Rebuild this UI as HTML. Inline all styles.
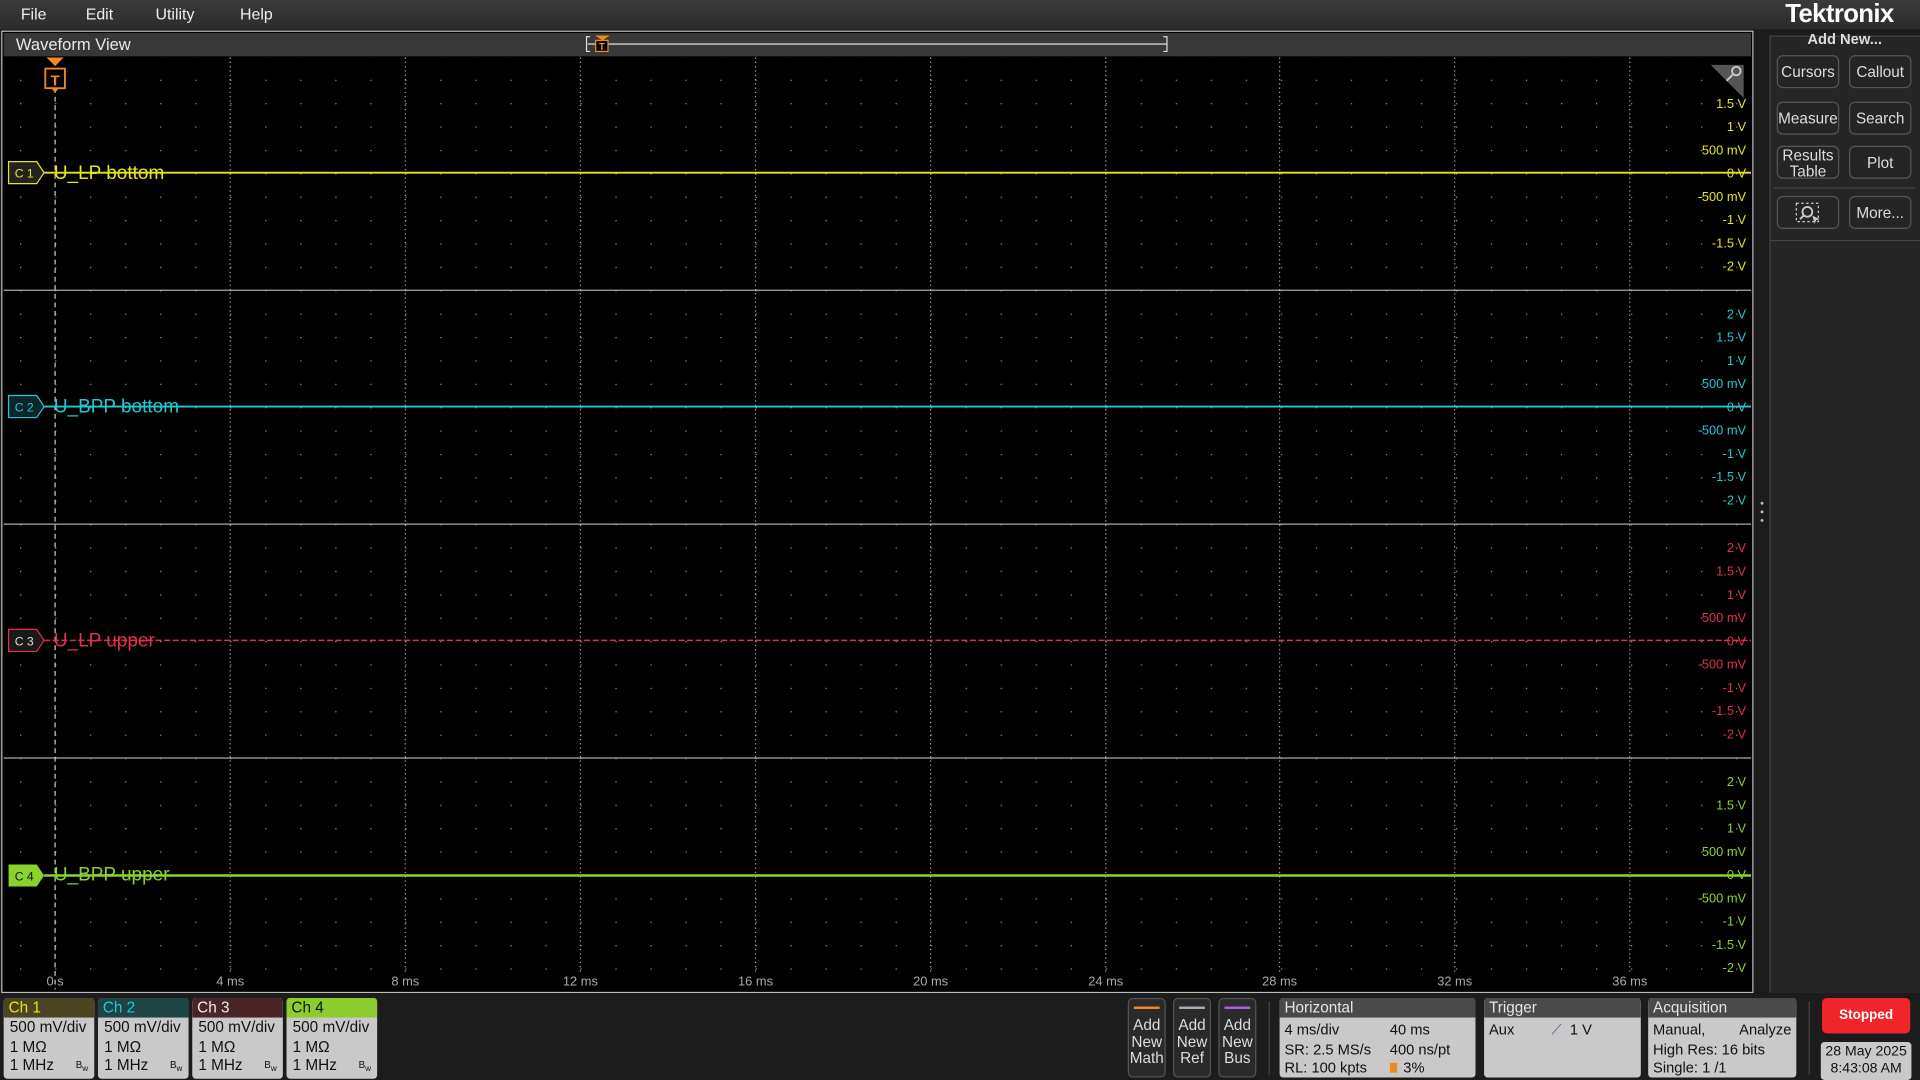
<!DOCTYPE html>
<html><head><meta charset="utf-8"><style>
html,body{margin:0;padding:0;background:#000;overflow:hidden;width:1920px;height:1080px}
#w{position:absolute;left:0;top:0;width:1568px;height:882px;transform:scale(1.22449);transform-origin:0 0;font-family:"Liberation Sans","DejaVu Sans",sans-serif;background:#1c1c1c}
.a{position:absolute}
.menu{left:0;top:0;width:1568px;height:24px;background:linear-gradient(#3a3a3a,#2c2c2c);color:#eee;font-size:13px}
.menu span{position:absolute;top:4px}
.btn{position:absolute;width:51px;height:27px;background:#252525;border:1px solid #5a5550;border-radius:5px;color:#ddd;font-size:12.5px;text-align:center;line-height:27px;box-sizing:border-box}
.ch{position:absolute;top:815px;width:74px;height:66px;background:#c9c9c9;border-radius:3px;overflow:hidden;font-size:12px;color:#111}
.ch .h{height:16px;line-height:16px;padding-left:4px;font-size:12.5px}
.ch .l{padding-left:5px;padding-top:1px;line-height:15.5px;font-size:12.5px}
.bw{position:absolute;right:5px;bottom:4px;font-size:8px}
.an{position:absolute;top:815px;width:31px;height:65px;background:#2a2a2a;border:1px solid #555;border-radius:4px;box-sizing:border-box;color:#ddd;font-size:12.5px;text-align:center;line-height:13.5px;padding-top:15px}
.an i{position:absolute;left:4px;right:4px;top:6px;height:2px}
.pn{position:absolute;top:815px;height:65px;background:#c9c9c9;border-radius:3px;overflow:hidden;color:#111;font-size:12px}
.pn .h{height:16px;background:#4a4a4a;color:#e6e6e6;padding-left:4px;line-height:16px;font-size:12.5px}
</style></head><body><div id="w">
<div class="a menu"><span style="left:17px">File</span><span style="left:70px">Edit</span><span style="left:127px">Utility</span><span style="left:196px">Help</span></div>
<div class="a" style="left:1458px;top:0px;color:#fff;font-weight:bold;font-size:21px;letter-spacing:-0.5px">Tektronix</div>
<div class="a" style="left:1px;top:25px;width:1431px;height:786px;border:1px solid #bbb;box-sizing:border-box;background:#000"></div>
<div class="a" style="left:3px;top:27px;width:1427px;height:19px;background:#383838;color:#e8e8e8;font-size:13.5px;line-height:19px;padding-left:10px;box-sizing:border-box">Waveform View</div>
<svg class="a" style="left:0;top:0" width="1568" height="882" viewBox="0 0 1568 882">
<defs>
<pattern id="d" x="45" y="46" width="28.6" height="19.1" patternUnits="userSpaceOnUse"><rect x="0" y="0" width="1" height="1" fill="#999"/></pattern>
</defs>
<line x1="480" y1="36" x2="953" y2="36" stroke="#aaa" stroke-width="1.5"/>
<path d="M482,30h-3v12h3M950,30h3v12h-3" stroke="#ddd" fill="none"/>
<path d="M486,29h12l-6,4z" fill="#f08a1e"/>
<rect x="486.5" y="33" width="10" height="9" fill="#000" stroke="#f08a1e"/>
<text x="491.5" y="41" font-size="8" fill="#f08a1e" text-anchor="middle" font-weight="bold">T</text>
<rect x="3" y="47" width="1427" height="762" fill="url(#d)"/>
<g stroke="#aaa" stroke-dasharray="1 2.5">
<line x1="188" y1="47" x2="188" y2="795"/><line x1="331" y1="47" x2="331" y2="795"/><line x1="474" y1="47" x2="474" y2="795"/><line x1="617" y1="47" x2="617" y2="795"/><line x1="760" y1="47" x2="760" y2="795"/><line x1="903" y1="47" x2="903" y2="795"/><line x1="1045" y1="47" x2="1045" y2="795"/><line x1="1188" y1="47" x2="1188" y2="795"/><line x1="1331" y1="47" x2="1331" y2="795"/>
</g>
<g stroke="#aaa"><line x1="3" y1="237" x2="1430" y2="237"/><line x1="3" y1="428" x2="1430" y2="428"/><line x1="3" y1="619" x2="1430" y2="619"/></g>
<line x1="45" y1="72" x2="45" y2="808" stroke="#ccc" stroke-dasharray="4 3"/>
<path d="M38,47h14l-7,7z" fill="#f08a1e"/>
<rect x="37" y="56" width="16" height="16" fill="#000" stroke="#f08a1e" stroke-width="1.5"/>
<text x="45" y="70" font-size="12" fill="#f08a1e" text-anchor="middle" font-weight="bold">T</text>
<path d="M42,72l3,4l3,-4z" fill="#f08a1e"/>
<path d="M1397,53h27v27z" fill="#555"/><circle cx="1418" cy="58" r="3.5" stroke="#ccc" fill="none" stroke-width="1.5"/><line x1="1415" y1="61" x2="1410" y2="66" stroke="#ccc" stroke-width="1.5"/>
<line x1="36" y1="141" x2="1430" y2="141" stroke="#e6e61e" stroke-width="1.5"/>
<line x1="36" y1="332" x2="1430" y2="332" stroke="#22c8d0" stroke-width="1.5"/>
<line x1="36" y1="523" x2="1430" y2="523" stroke="#e0304a" stroke-width="1.2" stroke-dasharray="5 2"/>
<line x1="36" y1="715" x2="1430" y2="715" stroke="#8cd22c" stroke-width="2"/>
<path d="M7,132h23l6,9l-6,9h-23z" fill="#222" stroke="#e6e61e"/><text x="12" y="145" font-size="10" fill="#e6e61e">C 1</text>
<path d="M7,323h23l6,9l-6,9h-23z" fill="#0c2628" stroke="#22c8d0"/><text x="12" y="336" font-size="10" fill="#22c8d0">C 2</text>
<path d="M7,514h23l6,9l-6,9h-23z" fill="#1a1a1a" stroke="#e0304a"/><text x="12" y="527" font-size="10" fill="#ddd">C 3</text>
<path d="M7,706h23l6,9l-6,9h-23z" fill="#8cd22c"/><text x="12" y="719" font-size="10" fill="#111">C 4</text>
<g font-size="15.5"><text x="44" y="146" fill="#e6e61e">U_LP bottom</text><text x="44" y="337" fill="#22c8d0">U_BPP bottom</text><text x="44" y="528" fill="#e0304a">U_LP upper</text><text x="44" y="719" fill="#8cd22c">U_BPP upper</text></g>
<g font-size="10.5" text-anchor="end">
<g fill="#e6e61e"><text x="1426" y="88">1.5 V</text><text x="1426" y="107">1 V</text><text x="1426" y="126">500 mV</text><text x="1426" y="145">0 V</text><text x="1426" y="164">-500 mV</text><text x="1426" y="183">-1 V</text><text x="1426" y="202">-1.5 V</text><text x="1426" y="221">-2 V</text></g>
<g fill="#22c8d0"><text x="1426" y="260">2 V</text><text x="1426" y="279">1.5 V</text><text x="1426" y="298">1 V</text><text x="1426" y="317">500 mV</text><text x="1426" y="336">0 V</text><text x="1426" y="355">-500 mV</text><text x="1426" y="374">-1 V</text><text x="1426" y="393">-1.5 V</text><text x="1426" y="412">-2 V</text></g>
<g fill="#e0304a"><text x="1426" y="451">2 V</text><text x="1426" y="470">1.5 V</text><text x="1426" y="489">1 V</text><text x="1426" y="508">500 mV</text><text x="1426" y="527">0 V</text><text x="1426" y="546">-500 mV</text><text x="1426" y="565">-1 V</text><text x="1426" y="584">-1.5 V</text><text x="1426" y="603">-2 V</text></g>
<g fill="#8cd22c"><text x="1426" y="642">2 V</text><text x="1426" y="661">1.5 V</text><text x="1426" y="680">1 V</text><text x="1426" y="699">500 mV</text><text x="1426" y="718">0 V</text><text x="1426" y="737">-500 mV</text><text x="1426" y="756">-1 V</text><text x="1426" y="775">-1.5 V</text><text x="1426" y="794">-2 V</text></g>
</g>
<g font-size="10.5" fill="#aaa" text-anchor="middle"><text x="45" y="805">0 s</text><text x="188" y="805">4 ms</text><text x="331" y="805">8 ms</text><text x="474" y="805">12 ms</text><text x="617" y="805">16 ms</text><text x="760" y="805">20 ms</text><text x="903" y="805">24 ms</text><text x="1045" y="805">28 ms</text><text x="1188" y="805">32 ms</text><text x="1331" y="805">36 ms</text></g>
<g fill="#bbb"><circle cx="1439" cy="411" r="1.2"/><circle cx="1439" cy="418" r="1.2"/><circle cx="1439" cy="425" r="1.2"/></g>
</svg>
<div class="a" style="left:1445px;top:29px;width:123px;height:781px;border-left:1px solid #444;border-top:1px solid #444;background:#262626"></div>
<div class="a" style="left:1445px;top:25px;width:123px;text-align:center;color:#ddd;font-weight:bold;font-size:12px">Add New...</div>
<div class="btn" style="left:1451px;top:45px">Cursors</div><div class="btn" style="left:1510px;top:45px">Callout</div>
<div class="btn" style="left:1451px;top:83px">Measure</div><div class="btn" style="left:1510px;top:83px">Search</div>
<div class="btn" style="left:1451px;top:119px;line-height:13px;padding-top:1px">Results<br>Table</div><div class="btn" style="left:1510px;top:119px">Plot</div>
<div class="a" style="left:1448px;top:153px;width:116px;height:1px;background:#444"></div>
<div class="btn" style="left:1451px;top:160px"><svg width="24" height="20" viewBox="0 0 24 20" style="margin-top:3px"><rect x="2" y="2" width="18" height="15" fill="none" stroke="#ccc" stroke-dasharray="2 2"/><circle cx="11" cy="9" r="4" fill="none" stroke="#ccc" stroke-width="1.5"/><line x1="8" y1="12" x2="5" y2="15" stroke="#ccc" stroke-width="1.5"/><path d="M15,12l6,3l-3,1l-1,3z" fill="#ccc"/></svg></div>
<div class="btn" style="left:1510px;top:160px">More...</div>
<div class="a" style="left:1445px;top:196px;width:123px;height:1px;background:#444"></div>
<div class="a" style="left:0;top:811px;width:1568px;height:71px;background:#1c1c1c"></div>
<div class="ch" style="left:3px"><div class="h" style="background:#4a4520;color:#e6e61e">Ch 1</div><div class="l">500 mV/div<br>1 MΩ<br>1 MHz</div><span class="bw">B<sub>w</sub></span></div>
<div class="ch" style="left:80px"><div class="h" style="background:#1e4545;color:#22c8d0">Ch 2</div><div class="l">500 mV/div<br>1 MΩ<br>1 MHz</div><span class="bw">B<sub>w</sub></span></div>
<div class="ch" style="left:157px"><div class="h" style="background:#4a2528;color:#eee">Ch 3</div><div class="l">500 mV/div<br>1 MΩ<br>1 MHz</div><span class="bw">B<sub>w</sub></span></div>
<div class="ch" style="left:234px"><div class="h" style="background:#8ccc2c;color:#111">Ch 4</div><div class="l">500 mV/div<br>1 MΩ<br>1 MHz</div><span class="bw">B<sub>w</sub></span></div>
<div class="an" style="left:921px"><i style="background:#f08a1e"></i>Add<br>New<br>Math</div>
<div class="an" style="left:958px"><i style="background:#aab"></i>Add<br>New<br>Ref</div>
<div class="an" style="left:995px"><i style="background:#b060e0"></i>Add<br>New<br>Bus</div>
<div class="a" style="left:1036px;top:818px;width:1px;height:60px;background:#444"></div>
<div class="pn" style="left:1045px;width:160px"><div class="h">Horizontal</div><div style="position:absolute;left:4px;top:19px;line-height:15.5px">4 ms/div<br>SR: 2.5 MS/s<br>RL: 100 kpts</div><div style="position:absolute;left:90px;top:19px;line-height:15.5px">40 ms<br>400 ns/pt<br><span style="display:inline-block;width:6px;height:8px;background:#f08a1e;margin-right:5px"></span>3%</div></div>
<div class="pn" style="left:1212px;width:128px"><div class="h">Trigger</div><div style="position:absolute;left:4px;top:19px">Aux</div><div style="position:absolute;left:55px;top:19px"><span style="color:#558">⟋</span>&nbsp; 1 V</div></div>
<div class="pn" style="left:1346px;width:121px"><div class="h">Acquisition</div><div style="position:absolute;left:4px;right:4px;top:19px;line-height:15.5px">Manual,<span style="float:right">Analyze</span><br>High Res: 16 bits<br>Single: 1 /1</div></div>
<div class="a" style="left:1477px;top:818px;width:1px;height:60px;background:#444"></div>
<div class="a" style="left:1488px;top:815px;width:72px;height:29px;background:#f0242a;border-radius:4px;color:#fff;font-weight:bold;font-size:11px;text-align:center;line-height:29px">Stopped</div>
<div class="a" style="left:1487px;top:851px;width:74px;height:30px;background:#c9c9c9;border-radius:3px;color:#111;font-size:11.5px;text-align:center;line-height:14px;padding-top:1px">28 May 2025<br>8:43:08 AM</div>
</div></body></html>
